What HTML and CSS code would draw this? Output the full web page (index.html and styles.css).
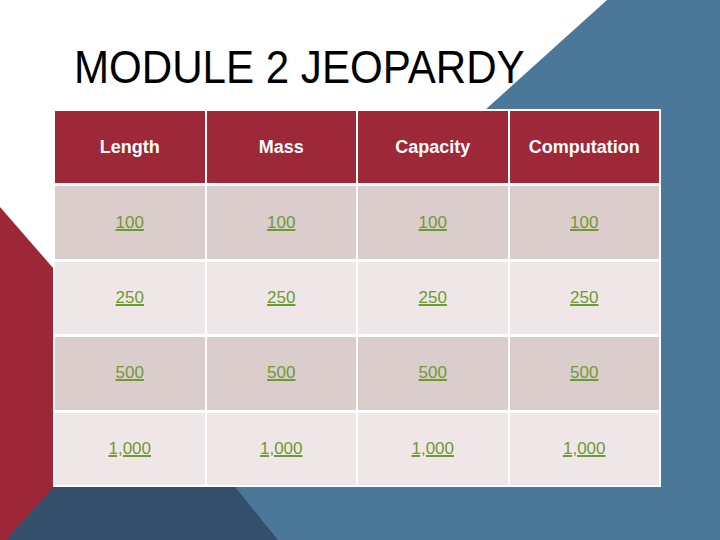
FILE: index.html
```html
<!DOCTYPE html>
<html>
<head>
<meta charset="utf-8">
<link rel="stylesheet" href="styles.css">
</head>
<body>
<div class="slide">
  <svg class="deco" viewBox="0 0 720 540" width="720" height="540" aria-hidden="true">
    <polygon fill="#344f6b" points="0,470 250,470 300,540 0,540"/>
    <polygon fill="#9e2737" points="0,207 60,276 60,480 0,546"/>
    <polygon fill="#4b7898" points="607,0 720,0 720,540 278,540 235,487 485,110"/>
  </svg>
  <h1 class="title">MODULE 2 JEOPARDY</h1>
  <div class="board">
    <div class="cell head">Length</div>
    <div class="cell head">Mass</div>
    <div class="cell head">Capacity</div>
    <div class="cell head">Computation</div>

    <div class="cell odd"><a href="#">100</a></div>
    <div class="cell odd"><a href="#">100</a></div>
    <div class="cell odd"><a href="#">100</a></div>
    <div class="cell odd"><a href="#">100</a></div>

    <div class="cell even"><a href="#">250</a></div>
    <div class="cell even"><a href="#">250</a></div>
    <div class="cell even"><a href="#">250</a></div>
    <div class="cell even"><a href="#">250</a></div>

    <div class="cell odd"><a href="#">500</a></div>
    <div class="cell odd"><a href="#">500</a></div>
    <div class="cell odd"><a href="#">500</a></div>
    <div class="cell odd"><a href="#">500</a></div>

    <div class="cell even"><a href="#">1,000</a></div>
    <div class="cell even"><a href="#">1,000</a></div>
    <div class="cell even"><a href="#">1,000</a></div>
    <div class="cell even"><a href="#">1,000</a></div>
  </div>
</div>
</body>
</html>
```

FILE: styles.css
```css
html, body {
  margin: 0;
  padding: 0;
  background: #ffffff;
}

.slide {
  position: relative;
  width: 720px;
  height: 540px;
  overflow: hidden;
  font-family: "Liberation Sans", Arial, sans-serif;
}

.deco {
  position: absolute;
  left: 0;
  top: 0;
  display: block;
}

.title {
  position: relative;
  margin: 44px 0 0 74px;
  font-size: 46px;
  line-height: 46px;
  font-weight: normal;
  color: #000000;
  white-space: nowrap;
  transform: scaleX(0.915);
  transform-origin: left center;
}

.board {
  position: relative;
  margin: 19px 0 0 53px;
  width: 608px;
  height: 378px;
  box-sizing: border-box;
  padding: 2px;
  background: #ffffff;
  display: grid;
  grid-template-columns: repeat(4, 1fr);
  grid-template-rows: repeat(5, 1fr);
  column-gap: 2px;
  row-gap: 3px;
}

.cell {
  display: flex;
  align-items: center;
  justify-content: center;
}

.head {
  background: #9d2838;
  color: #ffffff;
  font-weight: bold;
  font-size: 18px;
}

.odd {
  background: #dccdcd;
}

.even {
  background: #efe7e7;
}

.cell a {
  color: #6f9a32;
  font-size: 17px;
  text-decoration: underline;
  text-decoration-thickness: 2px;
}
```
